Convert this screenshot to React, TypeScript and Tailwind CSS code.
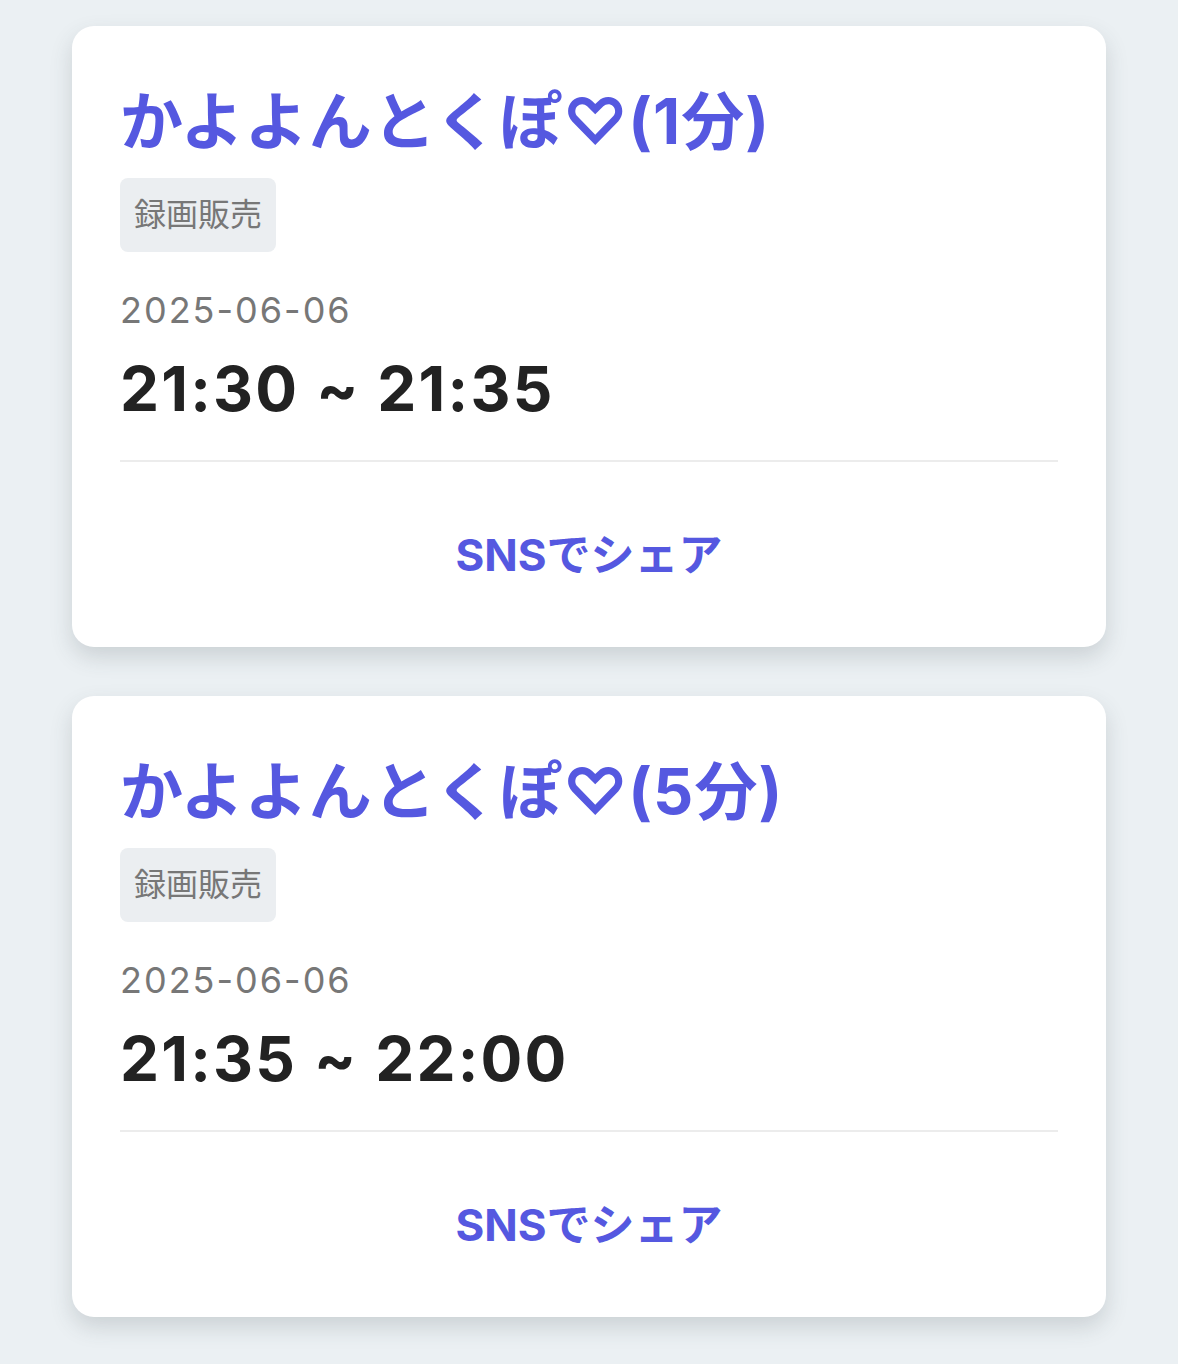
const items = [
  { title: 'かよよんとくぽ♡(1分)', date: '2025-06-06', time: '21:30 ~ 21:35' },
  { title: 'かよよんとくぽ♡(5分)', date: '2025-06-06', time: '21:35 ~ 22:00' },
];

function EventCard({ title, date, time }: { title: string; date: string; time: string }) {
  return (
    <div className="w-[1034px] rounded-[22px] bg-white px-[48px] shadow-[0_10px_22px_rgba(60,70,80,0.18)]">
      <h2 className="pt-[59px] text-[63px] font-bold leading-[72px] tracking-[1px] text-[#5558e0]">{title}</h2>
      <div className="mt-[21px] flex">
        <span className="rounded-[8px] bg-[#ebeef1] px-[14px] py-[17px] text-[32px] leading-[40px] text-[#777777]">
          録画販売
        </span>
      </div>
      <div className="mt-[36px] text-[36px] leading-[44px] tracking-[2px] text-[#777777]">{date}</div>
      <div className="mt-[21px] text-[62px] font-bold leading-[72px] tracking-[2.2px] text-[#222222]">{time}</div>
      <div className="mt-[35px] h-[2px] bg-[#ececec]" />
      <button className="flex h-[185px] w-full items-center justify-center text-[44px] font-bold text-[#5558e0]">
        SNSでシェア
      </button>
    </div>
  );
}

export default function App() {
  return (
    <div
      className="flex min-h-screen flex-col gap-[49px] bg-[#ebf0f3] px-[72px] pt-[26px] pb-[48px]"
      style={{ fontFamily: 'Inter, "Noto Sans CJK JP", sans-serif' }}
    >
      {items.map((item, i) => (
        <EventCard key={i} {...item} />
      ))}
    </div>
  );
}
